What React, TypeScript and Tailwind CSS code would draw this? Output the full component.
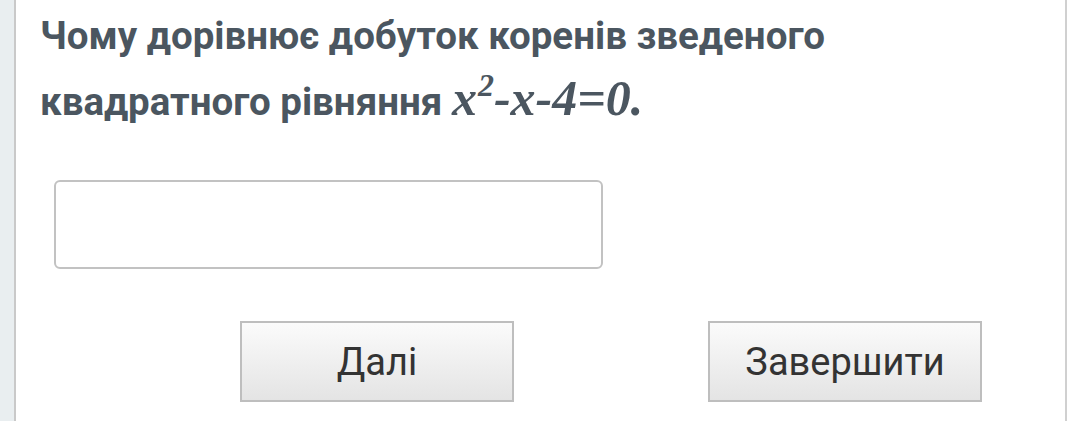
export default function App() {
  return (
    <div className="flex w-[1068px] h-[421px] bg-white overflow-hidden" style={{ fontFamily: "Roboto, 'Noto Sans', sans-serif" }}>
      <div className="w-[14px] shrink-0 bg-[#e9eef0]" />
      <div className="w-[2px] shrink-0 bg-[#c9c9c9]" />
      <div className="flex-1 flex flex-col pl-[24px] pt-[3px]">
        <p className="text-[38.5px] leading-[66px] font-bold text-[#4b5660]">
          Чому дорівнює добуток коренів зведеного
          <br />
          квадратного рівняння{" "}
          <span className="text-[50px] leading-[50px] italic font-bold" style={{ fontFamily: "'Liberation Serif', 'DejaVu Serif', serif" }}>
            x<sup className="text-[32px] -top-[19px] ml-[1px]">2</sup>-x-4=0.
          </span>
        </p>
        <div className="mt-[45px] ml-[14px] w-[549px] h-[89px] rounded-[6px] border-2 border-[#c2c2c2] bg-white" />
        <div className="flex mt-[52px] ml-[200px] gap-[194px]">
          <button className="w-[274px] h-[81px] border-2 border-[#bebebe] bg-gradient-to-b from-[#fbfbfb] to-[#e4e4e4] text-[38px] text-[#333] pt-[2px]">
            Далі
          </button>
          <button className="w-[274px] h-[81px] border-2 border-[#bebebe] bg-gradient-to-b from-[#fbfbfb] to-[#e4e4e4] text-[38px] text-[#333] pt-[2px]">
            Завершити
          </button>
        </div>
      </div>
      <div className="w-[2px] shrink-0 bg-[#d0d0d0] mr-[1px]" />
    </div>
  );
}
